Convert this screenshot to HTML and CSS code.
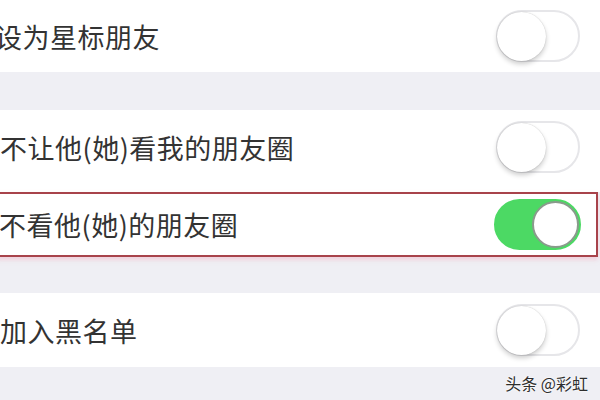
FILE: index.html
```html
<!DOCTYPE html>
<html lang="zh">
<head>
<meta charset="utf-8">
<link rel="stylesheet" href="styles.css">
</head>
<body>
<div class="page">
  <div class="row row-first">
    <span class="label label-cut">设为星标朋友</span>
    <span class="switch"><span class="knob"></span></span>
  </div>
  <div class="gap gap-a"></div>
  <div class="row row-second">
    <span class="label">不让他(她)看我的朋友圈</span>
    <span class="switch"><span class="knob"></span></span>
  </div>
  <div class="row row-marked">
    <span class="label">不看他(她)的朋友圈</span>
    <span class="switch on"><span class="knob"></span></span>
  </div>
  <div class="gap gap-b"></div>
  <div class="row row-last">
    <span class="label">加入黑名单</span>
    <span class="switch"><span class="knob"></span></span>
  </div>
  <div class="footer">
    <span class="watermark">头条 @彩虹</span>
  </div>
</div>
</body>
</html>
```
FILE: styles.css
```css
html, body {
  margin: 0;
  padding: 0;
}
body {
  background: #efeff4;
  font-family: "Noto Sans CJK SC", "Noto Sans", sans-serif;
  overflow: hidden;
}
.page {
  width: 600px;
  height: 400px;
  display: flex;
  flex-direction: column;
  overflow: hidden;
}
.row {
  background: #fff;
  display: flex;
  align-items: center;
  justify-content: space-between;
  box-sizing: border-box;
  padding-right: 20px;
  flex: none;
}
.label {
  font-size: 27px;
  color: #333;
  letter-spacing: 0.5px;
  line-height: 1;
}
.label-cut {
  margin-left: -5px;
}
.row-first {
  height: 72px;
}
.gap {
  flex: none;
}
.gap-a {
  height: 38px;
}
.row-second {
  height: 82px;
  padding-bottom: 8px;
}
.row-marked {
  height: 65px;
  border: 2px solid #a8434b;
  margin-left: -3px;
  margin-right: 2px;
  padding-right: 15px;
  box-shadow: 0 3px 4px rgba(240, 190, 205, 0.6);
}
.gap-b {
  height: 36px;
}
.row-last {
  height: 74px;
}
.switch {
  width: 84px;
  height: 52px;
  box-sizing: border-box;
  border: 2px solid #e6e6e9;
  border-radius: 26px;
  background: #fff;
  display: flex;
  align-items: center;
  flex: none;
}
.knob {
  width: 49px;
  height: 49px;
  border-radius: 50%;
  background: #fff;
  margin-left: -1px;
  box-shadow: 0 3px 5px rgba(0, 0, 0, 0.2), 0 0 1px rgba(0, 0, 0, 0.25);
}
.switch.on {
  width: 87px;
  height: 51px;
  background: #4cd964;
  border-color: #4cd964;
  justify-content: flex-end;
}
.switch.on .knob {
  width: 47px;
  height: 47px;
  margin-left: 0;
  margin-right: 0;
  box-sizing: border-box;
  border: 2px solid #8a9a8c;
  box-shadow: none;
}
.footer {
  flex: 1;
  display: flex;
  align-items: flex-end;
  justify-content: flex-end;
  padding: 0 12px 9px 0;
}
.watermark {
  font-size: 16px;
  color: #2e2e2e;
  line-height: 1;
  text-shadow: 0 0 2px #fff, 0 0 2px #fff;
}
```
